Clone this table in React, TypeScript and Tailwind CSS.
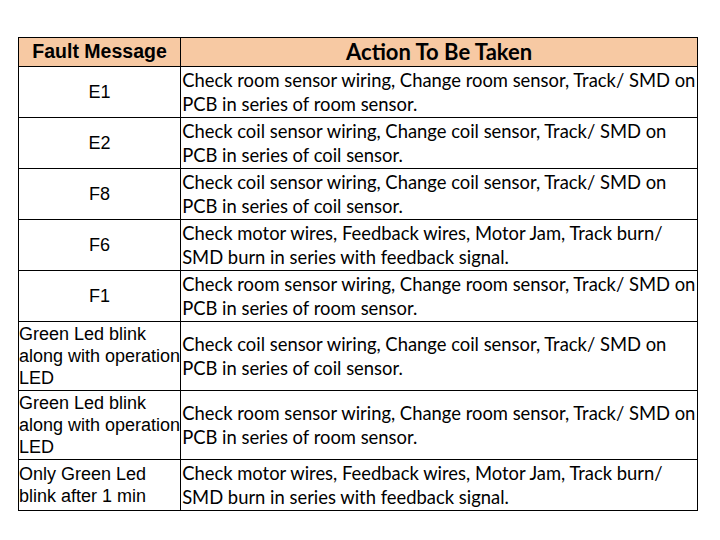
type Row = { fault: string[]; action: string[]; h: string; left?: boolean };

const rows: Row[] = [
  { fault: ["E1"], action: ["Check room sensor wiring, Change room sensor, Track/ SMD on", "PCB in series of room sensor."], h: "h-[51px]" },
  { fault: ["E2"], action: ["Check coil sensor wiring, Change coil sensor, Track/ SMD on", "PCB in series of coil sensor."], h: "h-[51px]" },
  { fault: ["F8"], action: ["Check coil sensor wiring, Change coil sensor, Track/ SMD on", "PCB in series of coil sensor."], h: "h-[51px]" },
  { fault: ["F6"], action: ["Check motor wires, Feedback wires, Motor Jam, Track burn/", "SMD burn in series with feedback signal."], h: "h-[51px]" },
  { fault: ["F1"], action: ["Check room sensor wiring, Change room sensor, Track/ SMD on", "PCB in series of room sensor."], h: "h-[51px]" },
  { fault: ["Green Led blink", "along with operation", "LED"], action: ["Check coil sensor wiring, Change coil sensor, Track/ SMD on", "PCB in series of coil sensor."], h: "h-[69px]", left: true },
  { fault: ["Green Led blink", "along with operation", "LED"], action: ["Check room sensor wiring, Change room sensor, Track/ SMD on", "PCB in series of room sensor."], h: "h-[69px]", left: true },
  { fault: ["Only Green Led", "blink after 1 min"], action: ["Check motor wires, Feedback wires, Motor Jam, Track burn/", "SMD burn in series with feedback signal."], h: "h-[51px]", left: true },
];

const arial = "font-['Liberation_Sans',Arial,sans-serif]";
const calibri = "font-['Lato',sans-serif]";

export default function App() {
  return (
    <div className="w-[720px] h-[540px] bg-white pt-[37px] pl-[18px]">
      <table className="border-collapse text-black">
        <thead>
          <tr className="h-[29px] bg-[#f7c9a3]">
            <th className={`w-[158px] border border-black p-0 text-center text-[19.5px] font-bold leading-none ${arial}`}>
              Fault Message
            </th>
            <th className={`w-[517px] border border-black p-0 text-center text-[22px] font-bold leading-none ${calibri}`}>
              Action To Be Taken
            </th>
          </tr>
        </thead>
        <tbody>
          {rows.map((r, i) => (
            <tr key={i} className={r.h}>
              <td
                className={`border border-black p-0 align-middle text-[18px] leading-[22px] whitespace-nowrap ${arial} ${
                  r.left ? "text-left" : "text-center"
                }`}
              >
                {r.fault.map((l, j) => (
                  <div key={j}>{l}</div>
                ))}
              </td>
              <td className={`border border-black p-0 pl-px align-middle text-[18.4px] leading-[24px] whitespace-nowrap ${calibri}`}>
                {r.action.map((l, j) => (
                  <div key={j}>{l}</div>
                ))}
              </td>
            </tr>
          ))}
        </tbody>
      </table>
    </div>
  );
}
